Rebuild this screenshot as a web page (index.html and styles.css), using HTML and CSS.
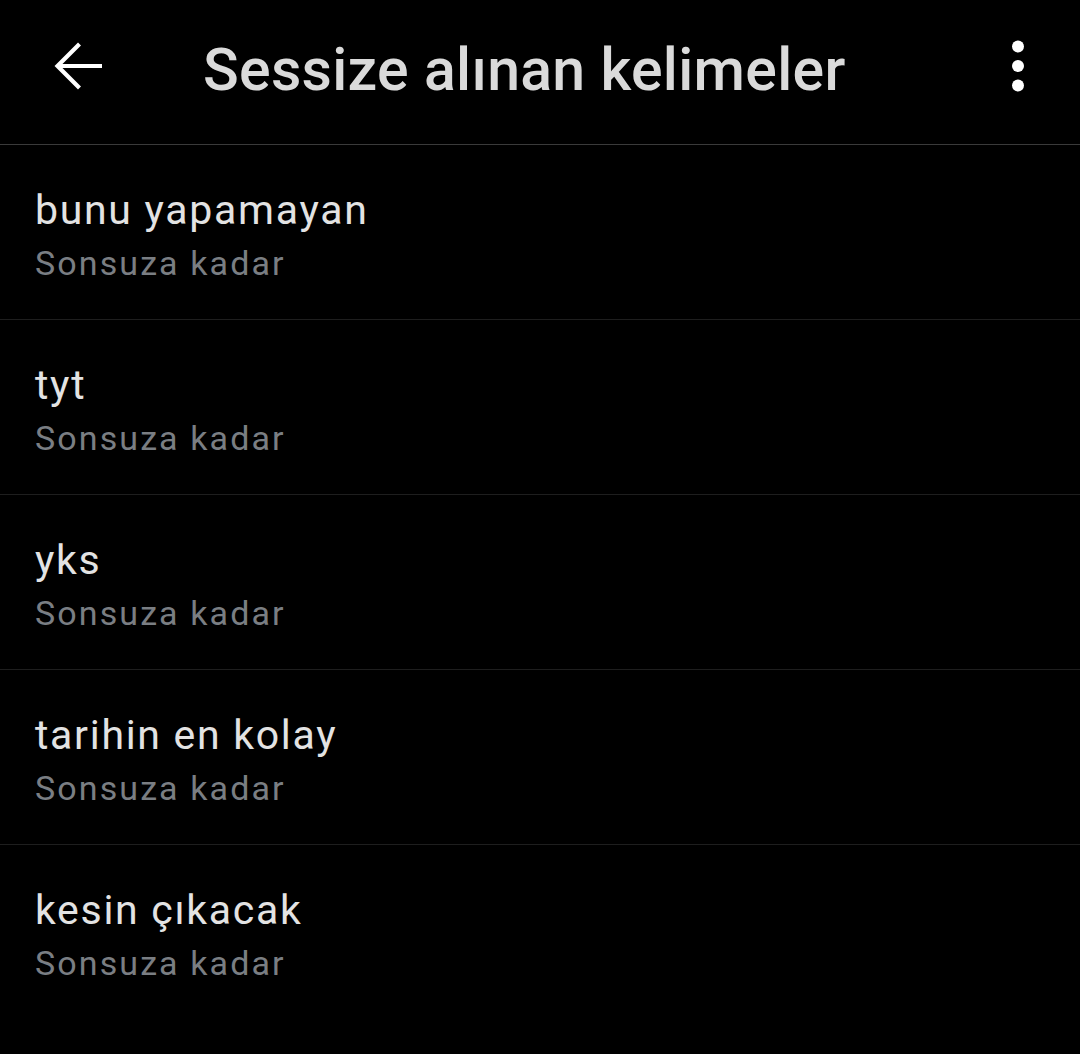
FILE: index.html
```html
<!DOCTYPE html>
<html lang="tr">
<head>
<meta charset="utf-8">
<link rel="stylesheet" href="styles.css">
</head>
<body>
<header class="topbar">
  <div class="back">
    <svg width="56" height="56" viewBox="0 0 56 56"><path d="M49 28 H6 M26.5 6 L4.5 28 L26.5 50" fill="none" stroke="#fff" stroke-width="4.2" stroke-linecap="butt" stroke-linejoin="miter"/></svg>
  </div>
  <h1 class="title">Sessize alınan kelimeler</h1>
  <div class="more">
    <svg width="12" height="52" viewBox="0 0 12 52"><circle cx="6" cy="6.5" r="6" fill="#fff"/><circle cx="6" cy="26" r="6" fill="#fff"/><circle cx="6" cy="45.5" r="6" fill="#fff"/></svg>
  </div>
</header>
<ul class="list">
  <li class="item"><span class="word">bunu yapamayan</span><span class="dur">Sonsuza kadar</span></li>
  <li class="item"><span class="word">tyt</span><span class="dur">Sonsuza kadar</span></li>
  <li class="item"><span class="word">yks</span><span class="dur">Sonsuza kadar</span></li>
  <li class="item"><span class="word">tarihin en kolay</span><span class="dur">Sonsuza kadar</span></li>
  <li class="item last"><span class="word">kesin çıkacak</span><span class="dur">Sonsuza kadar</span></li>
</ul>
</body>
</html>
```
FILE: styles.css
```css
html, body {
  margin: 0;
  padding: 0;
  background: #000;
  height: 100%;
  overflow: hidden;
}
body {
  font-family: Roboto, "Liberation Sans", sans-serif;
  color: #e7e9ea;
}
.topbar {
  height: 144px;
  display: flex;
  align-items: flex-start;
  border-bottom: 1px solid #3a3a3a;
}
.back {
  width: 56px;
  height: 56px;
  margin-left: 53px;
  margin-top: 38px;
  display: flex;
}
.title {
  margin: 35px 0 0 94px;
  font-weight: 500;
  font-size: 59px;
  line-height: 70px;
  color: #dadada;
  flex: 1;
  letter-spacing: 0.3px;
}
.more {
  margin: 40px 56px 0 0;
  display: flex;
}
.list {
  list-style: none;
  margin: 0;
  padding: 0;
}
.item {
  height: 175px;
  border-bottom: 1px solid #1e1e1e;
  display: flex;
  flex-direction: column;
  padding: 40px 0 0 35px;
  box-sizing: border-box;
}
.item.last {
  border-bottom: none;
}
.word {
  font-size: 41px;
  line-height: 50px;
  letter-spacing: 1.7px;
  color: #e3e3e3;
}
.dur {
  font-size: 34px;
  line-height: 40px;
  letter-spacing: 2.1px;
  color: #7a7e83;
  margin-top: 8px;
}
```
